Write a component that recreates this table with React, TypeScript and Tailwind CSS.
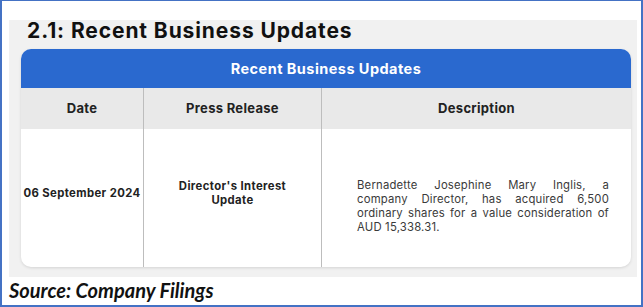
const sans = "font-['Inter','Open_Sans',sans-serif]";

const descLines = [
  "Bernadette Josephine Mary Inglis, a",
  "company Director, has acquired 6,500",
  "ordinary shares for a value consideration of",
];

export default function App() {
  return (
    <div className="w-[643px] h-[307px] bg-white border-t border-l-2 border-r-2 border-b-2 border-[#4472c4] flex flex-col">
      {/* Panel */}
      <div className={`mt-[19px] ml-[7px] w-[628px] h-[257px] bg-[#f1f1f1] flex flex-col ${sans}`}>
        <h1 className="pl-[18px] pt-[1px] h-[29px] text-[21px] leading-[20px] font-bold text-[#111] tracking-[0.9px]">
          2.1: Recent Business Updates
        </h1>

        {/* Card */}
        <div className="ml-[12px] w-[610px] h-[218px] bg-white rounded-[10px] overflow-hidden shadow-[0_1px_3px_rgba(0,0,0,0.12)] flex flex-col">
          <div className="h-[39px] bg-[#2a69cf] flex items-center justify-center text-white text-[14.5px] font-bold tracking-[0.45px]">
            Recent Business Updates
          </div>

          <div className="grid grid-cols-[123px_178px_1fr] grid-rows-[41px_1fr] flex-1">
            {/* Header row */}
            <div className="bg-[#e9e9e9] border-r-[1.5px] border-[#bdbdbd] flex items-center justify-center text-[13px] font-bold text-[#222] tracking-[0.3px]">
              Date
            </div>
            <div className="bg-[#e9e9e9] border-r-[1.5px] border-[#bdbdbd] flex items-center justify-center text-[13px] font-bold text-[#222] tracking-[0.3px]">
              Press Release
            </div>
            <div className="bg-[#e9e9e9] flex items-center justify-center text-[13px] font-bold text-[#222] tracking-[0.3px]">
              Description
            </div>

            {/* Body row */}
            <div className="border-r-[1.5px] border-[#bdbdbd] flex items-center justify-center pb-[10px] text-[11.3px] font-bold text-[#222] whitespace-nowrap tracking-[0.4px]">
              06 September 2024
            </div>
            <div className="border-r-[1.5px] border-[#bdbdbd] flex items-center justify-center pb-[10px] text-[11.3px] leading-[14px] font-bold text-[#222] text-center tracking-[0.4px]">
              Director's Interest
              <br />
              Update
            </div>
            <div className="flex items-center pl-[35px] pr-[22px] pt-[16px]">
              <div className="w-full text-[11.3px] leading-[14px] text-[#3a3a3a] tracking-[0.2px]">
                {descLines.map((line) => (
                  <div key={line} className="text-justify [text-align-last:justify]">
                    {line}
                  </div>
                ))}
                <div>AUD 15,338.31.</div>
              </div>
            </div>
          </div>
        </div>
      </div>

      <p className="pl-[7px] pt-[2px] text-[20px] leading-[22px] font-bold italic text-[#111] font-['Lato','Open_Sans',sans-serif]">
        Source: Company Filings
      </p>
    </div>
  );
}
